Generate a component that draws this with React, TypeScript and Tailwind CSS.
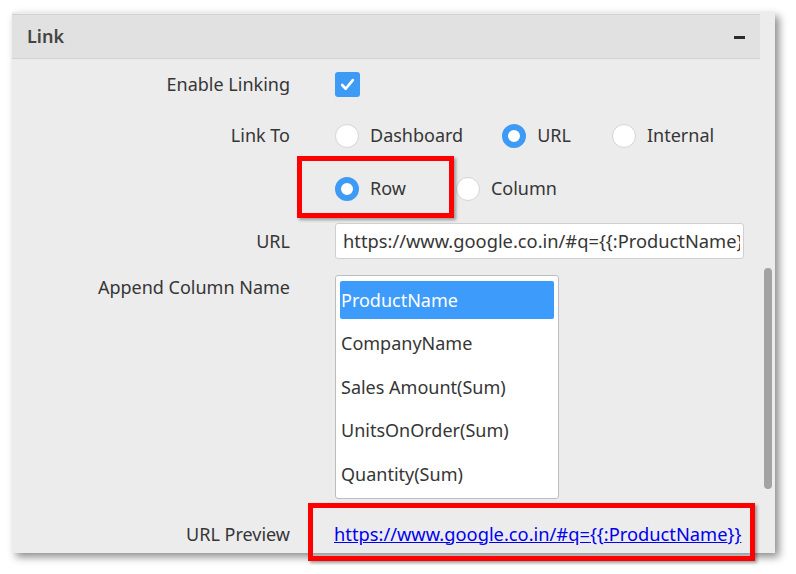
import React from "react";

const font = { fontFamily: '"Noto Sans", "Open Sans", sans-serif' };

function Radio({ checked }: { checked?: boolean }) {
  return checked ? (
    <span className="box-border inline-block h-[24px] w-[24px] shrink-0 rounded-full border-[6px] border-[#3d9bf6] bg-white" />
  ) : (
    <span className="box-border inline-block h-[24px] w-[24px] shrink-0 rounded-full border border-[#d4d4d4] bg-white" />
  );
}

function RadioOpt({ checked, label, className }: { checked?: boolean; label: string; className?: string }) {
  return (
    <div className={"flex items-center " + (className || "")}>
      <Radio checked={checked} />
      <span className="ml-[11px]">{label}</span>
    </div>
  );
}

export default function App() {
  const items = ["ProductName", "CompanyName", "Sales Amount(Sum)", "UnitsOnOrder(Sum)", "Quantity(Sum)"];
  return (
    <div className="h-[574px] w-[796px] overflow-hidden bg-white pt-[12px] pl-[12px] text-[18px] text-[#363636]" style={font}>
      <div className="flex h-[541px] w-[763px] bg-[#ececec] shadow-[4px_4px_8px_rgba(0,0,0,0.45)]">
        <div className="flex w-[748px] shrink-0 flex-col">
          <div className="mt-[2px] flex h-[45px] shrink-0 items-center justify-between border-t border-b border-[#d2d2d2] bg-[#e1e1e1] pl-[15px] pr-[15px]">
            <span className="text-[18px] font-semibold text-[#444]">Link</span>
            <span className="mt-[1px] h-[3px] w-[11px] bg-[#2b2b2b]" />
          </div>

          <div className="grid shrink-0 grid-cols-[278px_1fr] gap-x-[45px]">
            <div className="flex h-[50px] items-center justify-end">Enable Linking</div>
            <div className="flex h-[50px] items-center">
              <span className="flex h-[25px] w-[25px] items-center justify-center rounded-[3px] bg-[#3d9bf6]">
                <svg width="17" height="17" viewBox="0 0 16 16">
                  <path d="M3 8.5 L6.3 12 L13 3.8" fill="none" stroke="white" strokeWidth="2.5" strokeLinecap="round" strokeLinejoin="round" />
                </svg>
              </span>
            </div>

            <div className="flex h-[53px] items-center justify-end">Link To</div>
            <div className="flex h-[53px] items-center">
              <RadioOpt label="Dashboard" />
              <RadioOpt label="URL" checked className="ml-[39px]" />
              <RadioOpt label="Internal" className="ml-[41px]" />
            </div>

            <div className="h-[53px]" />
            <div className="relative flex h-[53px] items-center">
              <div className="pointer-events-none absolute left-[-38px] top-[-6px] h-[62px] w-[157px] border-[5px] border-[#f00] shadow-[2px_2px_3px_rgba(0,0,0,0.35)]" />
              <RadioOpt label="Row" checked />
              <RadioOpt label="Column" className="ml-[50px]" />
            </div>

            <div className="flex h-[52px] items-center justify-end">URL</div>
            <div className="flex h-[52px] items-center">
              <div className="flex h-[36px] w-[409px] items-center rounded-[3px] border border-[#cfcfcf] bg-white pl-[7px] pr-[3px]">
                <div className="overflow-hidden whitespace-nowrap text-[18.3px]">
                  https://www.google.co.in/#q={"{{"}:ProductName{"}}"}
                </div>
              </div>
            </div>

            <div className="mt-[8px] flex items-start justify-end">
              <span className="leading-[24px]">Append Column Name</span>
            </div>
            <div className="mt-[8px]">
              <div className="box-border flex h-[224px] w-[224px] flex-col rounded-[3px] border border-[#bdbdbd] bg-white px-[4px] pt-[5px]">
                {items.map((it, i) => (
                  <div
                    key={it}
                    className={
                      "flex h-[38px] shrink-0 items-center rounded-[2px] px-[1px] " +
                      (i === 0 ? "bg-[#3d9bfb] text-white" : "mt-[5.5px]")
                    }
                  >
                    {it}
                  </div>
                ))}
              </div>
            </div>

            <div className="mt-[4px] flex h-[58px] items-center justify-end pt-[4px]">URL Preview</div>
            <div className="mt-[4px] -ml-[27px]">
              <div className="flex h-[58px] w-[447px] items-center border-[5px] border-[#f00] pl-[21px] pt-[3px] shadow-[2px_2px_3px_rgba(0,0,0,0.35)]">
                <span className="whitespace-nowrap text-[18.3px] text-[#0000ee] underline">https://www.google.co.in/#q={"{{"}:ProductName{"}}"}</span>
              </div>
            </div>
          </div>
        </div>
        <div className="flex w-[15px] justify-center">
          <div className="mt-[256px] h-[221px] w-[8px] rounded-full bg-[#a3a3a3]" />
        </div>
      </div>
    </div>
  );
}
